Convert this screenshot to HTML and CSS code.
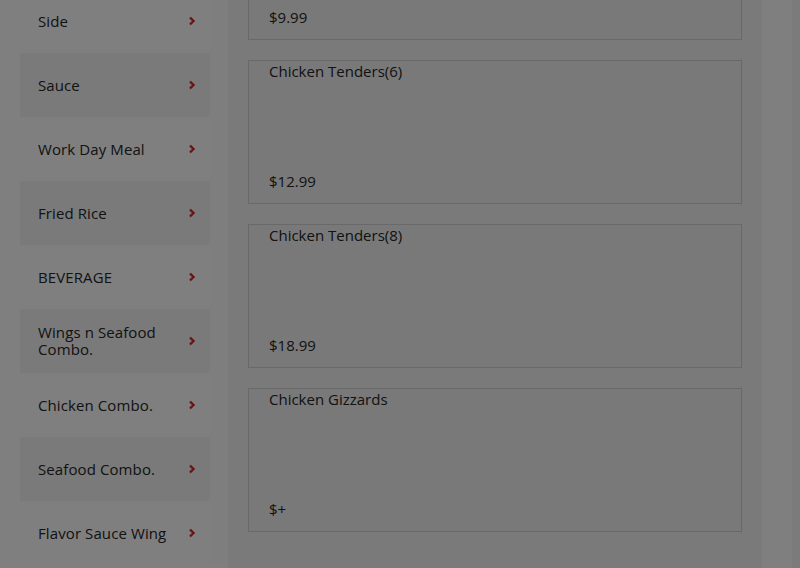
FILE: index.html
```html
<!DOCTYPE html>
<html lang="en">
<head>
<meta charset="utf-8">
<title>Menu</title>
<link rel="stylesheet" href="styles.css">
</head>
<body>
<div class="page">
  <nav class="sidebar">
    <a class="cat">Side<svg class="chev" viewBox="0 0 8 10"><path d="M2 1.5 L5.5 5 L2 8.5"/></svg></a>
    <a class="cat alt">Sauce<svg class="chev" viewBox="0 0 8 10"><path d="M2 1.5 L5.5 5 L2 8.5"/></svg></a>
    <a class="cat">Work Day Meal<svg class="chev" viewBox="0 0 8 10"><path d="M2 1.5 L5.5 5 L2 8.5"/></svg></a>
    <a class="cat alt">Fried Rice<svg class="chev" viewBox="0 0 8 10"><path d="M2 1.5 L5.5 5 L2 8.5"/></svg></a>
    <a class="cat">BEVERAGE<svg class="chev" viewBox="0 0 8 10"><path d="M2 1.5 L5.5 5 L2 8.5"/></svg></a>
    <a class="cat alt">Wings n Seafood Combo.<svg class="chev" viewBox="0 0 8 10"><path d="M2 1.5 L5.5 5 L2 8.5"/></svg></a>
    <a class="cat">Chicken Combo.<svg class="chev" viewBox="0 0 8 10"><path d="M2 1.5 L5.5 5 L2 8.5"/></svg></a>
    <a class="cat alt">Seafood Combo.<svg class="chev" viewBox="0 0 8 10"><path d="M2 1.5 L5.5 5 L2 8.5"/></svg></a>
    <a class="cat">Flavor Sauce Wing<svg class="chev" viewBox="0 0 8 10"><path d="M2 1.5 L5.5 5 L2 8.5"/></svg></a>
  </nav>
  <main class="content">
    <div class="card"><div class="name"></div><div class="price">$9.99</div></div>
    <div class="card"><div class="name">Chicken Tenders(6)</div><div class="price">$12.99</div></div>
    <div class="card"><div class="name">Chicken Tenders(8)</div><div class="price">$18.99</div></div>
    <div class="card"><div class="name">Chicken Gizzards</div><div class="price">$+</div></div>
  </main>
  <div class="edge"></div>
</div>
<div class="backdrop"></div>
</body>
</html>
```
FILE: styles.css
```css
html, body {
  margin: 0;
  padding: 0;
  height: 100%;
  overflow: hidden;
  background: #ffffff;
}
body {
  font-family: "Open Sans", "Liberation Sans", sans-serif;
  font-size: 15px;
  font-weight: 500;
  color: #262626;
}
.page {
  display: flex;
  align-items: flex-start;
  padding-left: 20px;
  margin-top: -11px;
}
.sidebar {
  width: 190px;
  flex: none;
  display: flex;
  flex-direction: column;
  border-right: 18px solid #fdfdfd;
}
.cat {
  height: 64px;
  box-sizing: border-box;
  display: flex;
  align-items: center;
  justify-content: space-between;
  padding: 0 14px 0 18px;
  background: #fefefe;
  line-height: 17px;
  color: #262626;
  letter-spacing: 0.1px;
}
.cat.alt {
  background: #f4f4f4;
}
.chev {
  width: 8px;
  height: 10px;
  flex: none;
  margin-left: 8px;
}
.chev path {
  fill: none;
  stroke: #d42a2a;
  stroke-width: 2.4;
}
.content {
  width: 534px;
  box-sizing: border-box;
  flex: none;
  margin-top: -113px;
  padding: 20px 20px 40px;
  background: #f4f4f4;
  display: flex;
  flex-direction: column;
  gap: 20px;
  min-height: 720px;
}
.card {
  height: 144px;
  box-sizing: border-box;
  border: 1px solid #d2d2d2;
  background: #f2f2f2;
  display: flex;
  flex-direction: column;
  justify-content: space-between;
  padding: 0 20px 12px;
  line-height: 20px;
}
.name {
  min-height: 20px;
}
.edge {
  flex: 1;
  align-self: stretch;
  min-height: 600px;
  border-right: 8px solid #f7f7f7;
  margin-left: 30px;
}
.backdrop {
  position: fixed;
  inset: 0;
  background: rgba(0, 0, 0, 0.5);
}
```
